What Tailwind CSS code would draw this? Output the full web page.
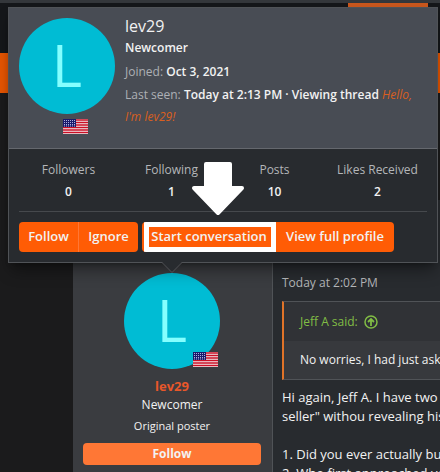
<!DOCTYPE html>
<html lang="en">
<head>
    <meta charset="UTF-8">
    <meta name="viewport" content="width=device-width, initial-scale=1.0">
    <title>Member tooltip</title>
    <script src="https://cdn.jsdelivr.net/npm/@tailwindcss/browser@4"></script>
</head>
<body class="bg-[#1b1b1c] min-h-screen overflow-hidden font-['Open_Sans','Noto_Sans',sans-serif] text-[13px] text-[#f2f2f2]">
    <svg class="hidden">
        <symbol id="us" viewBox="0 0 25 15">
            <rect width="25" height="15" fill="#f3eef0"/>
            <path d="M0 1h25M0 3.5h25M0 6h25M0 8.5h25M0 11h25M0 13.5h25" stroke="#cc1026" stroke-width="1.3"/>
            <rect width="13" height="8" fill="#1a1a6c"/>
            <path d="M1 1.5h12M1 3.5h12M1 5.5h12M1 7h12" stroke="#aeb0dc" stroke-width="1" stroke-dasharray="1 1"/>
        </symbol>
    </svg>

    <!-- Page header -->
    <header>
        <div class="h-[3px] bg-[#34373b]"></div>
        <nav class="h-[50px] bg-[#15171a] flex justify-end pr-3">
            <div class="w-20 h-1 bg-[#c9571d]"></div>
        </nav>
        <div class="h-10 bg-[#e95602]"></div>
    </header>

    <!-- Post -->
    <main class="ml-[73px] mt-[107px] min-h-[272px] flex">
        <section class="w-[200px] shrink-0 bg-[#3a3c40] border-r border-[#505357] pl-[10px] pr-[11px] pt-[73px] flex flex-col items-center text-center">
            <div class="relative">
                <div class="size-24 rounded-full bg-[#00bcd4] text-[#84ffff] text-[58px] font-medium leading-[94px] text-center">L</div>
                <svg class="absolute left-[69px] top-[79px] w-[25px] h-[15px]"><use href="#us"/></svg>
            </div>
            <a href="#" class="mt-2 text-[13px] leading-[18px] font-bold text-[#e8572a]">lev29</a>
            <p class="text-xs leading-[20px]">Newcomer</p>
            <p class="text-[11px] leading-[22px]">Original poster</p>
            <button class="mt-[6px] w-full h-[22px] rounded bg-[#ff7735] text-xs font-bold">Follow</button>
        </section>
        <article class="min-w-0 flex-1 overflow-hidden bg-[#282b2f] pl-[9px] pt-[73px] whitespace-nowrap">
            <time class="block text-xs leading-[20px] text-[#b4b6b9]">Today at 2:02 PM</time>
            <blockquote class="mt-2 border-y border-[#505357] border-l-2 border-l-[#e07328] bg-[#37393d]">
                <a href="#" class="flex items-center gap-[6px] h-[39px] pl-4 bg-[#303236] text-xs text-[#81bd45]">
                    Jeff A said:
                    <svg class="size-[14px]" viewBox="0 0 14 14" fill="none" stroke="currentColor" stroke-width="1.5"><circle cx="7" cy="7" r="6"/><path d="M7 11V4M4 7l3-3 3 3" stroke-width="1.8"/></svg>
                </a>
                <p class="h-[38px] pl-4 leading-[38px] text-xs">No worries, I had just asked</p>
            </blockquote>
            <p class="mt-2 text-[13px] leading-[19px]">Hi again, Jeff A. I have two questions<br>seller" withou revealing his<br><br>1. Did you ever actually buy<br>2. Who first approached you</p>
        </article>
    </main>

    <!-- Member card -->
    <aside class="absolute left-2 right-[2px] top-[7px] border border-[#505357] bg-[#282b2f] shadow-lg shadow-black/40">
        <div class="flex h-[141px] bg-[#484c54] border-b border-[#65686e] px-[10px] pt-[10px] gap-[10px]">
            <div class="w-24 shrink-0 relative">
                <div class="size-24 rounded-full bg-[#00bcd4] text-[#84ffff] text-[58px] font-medium leading-[94px] text-center">L</div>
                <svg class="absolute left-11 top-[101px] w-[25px] h-[15px]"><use href="#us"/></svg>
            </div>
            <div class="text-xs">
                <h4 class="text-base leading-[16px]">lev29</h4>
                <p class="font-semibold leading-[24px] mt-[2px]">Newcomer</p>
                <p class="font-semibold leading-[24px]"><span class="font-normal text-[#adb0b5]">Joined:</span> Oct 3, 2021</p>
                <p class="font-semibold leading-[22px]"><span class="font-normal text-[#adb0b5]">Last seen:</span> Today at 2:13 PM · Viewing thread <a href="#" class="font-normal italic text-[#d95f20]">Hello, I'm lev29!</a></p>
            </div>
        </div>
        <dl class="grid grid-cols-4 px-2 pt-[10px] text-center text-xs">
            <div><dt class="leading-[22px] text-[#b4b6b9]">Followers</dt><dd class="leading-[22px] font-semibold">0</dd></div>
            <div><dt class="leading-[22px] text-[#b4b6b9]">Following</dt><dd class="leading-[22px] font-semibold">1</dd></div>
            <div><dt class="leading-[22px] text-[#b4b6b9]">Posts</dt><dd class="leading-[22px] font-semibold">10</dd></div>
            <div><dt class="leading-[22px] text-[#b4b6b9]">Likes Received</dt><dd class="leading-[22px] font-semibold">2</dd></div>
        </dl>
        <div class="mx-[10px] mt-2 border-t border-[#46494d] py-[10px] flex gap-1 text-[13px] font-semibold">
            <div class="flex h-[30px] rounded overflow-hidden bg-[#ff5c05]">
                <button class="w-[60px] border-r border-[#ff7735]">Follow</button>
                <button class="w-[59px]">Ignore</button>
            </div>
            <div class="relative flex h-[30px] rounded overflow-hidden bg-[#ff5c05] whitespace-nowrap">
                <button class="w-[134px]">Start conversation</button>
                <button class="w-[118px]">View full profile</button>
                <div class="absolute left-[2px] top-0 w-[132px] h-[30px] border-5 border-white pointer-events-none"></div>
            </div>
        </div>
        <svg class="absolute left-[153px] -bottom-[11px] w-5 h-[11px]" viewBox="0 0 20 11"><path d="M0 0h20L10 10z" fill="#282b2f"/><path d="M0 .5L10 10.5L20 .5" fill="none" stroke="#505357"/></svg>
        <svg class="absolute left-[182px] top-[153px] w-[54px] h-[56px]" viewBox="0 0 54 56"><path d="M15 3h24v24h12L27 52L3 27h12z" fill="#fff" stroke="#fff" stroke-width="4" stroke-linejoin="round"/></svg>
    </aside>
</body>
</html>
